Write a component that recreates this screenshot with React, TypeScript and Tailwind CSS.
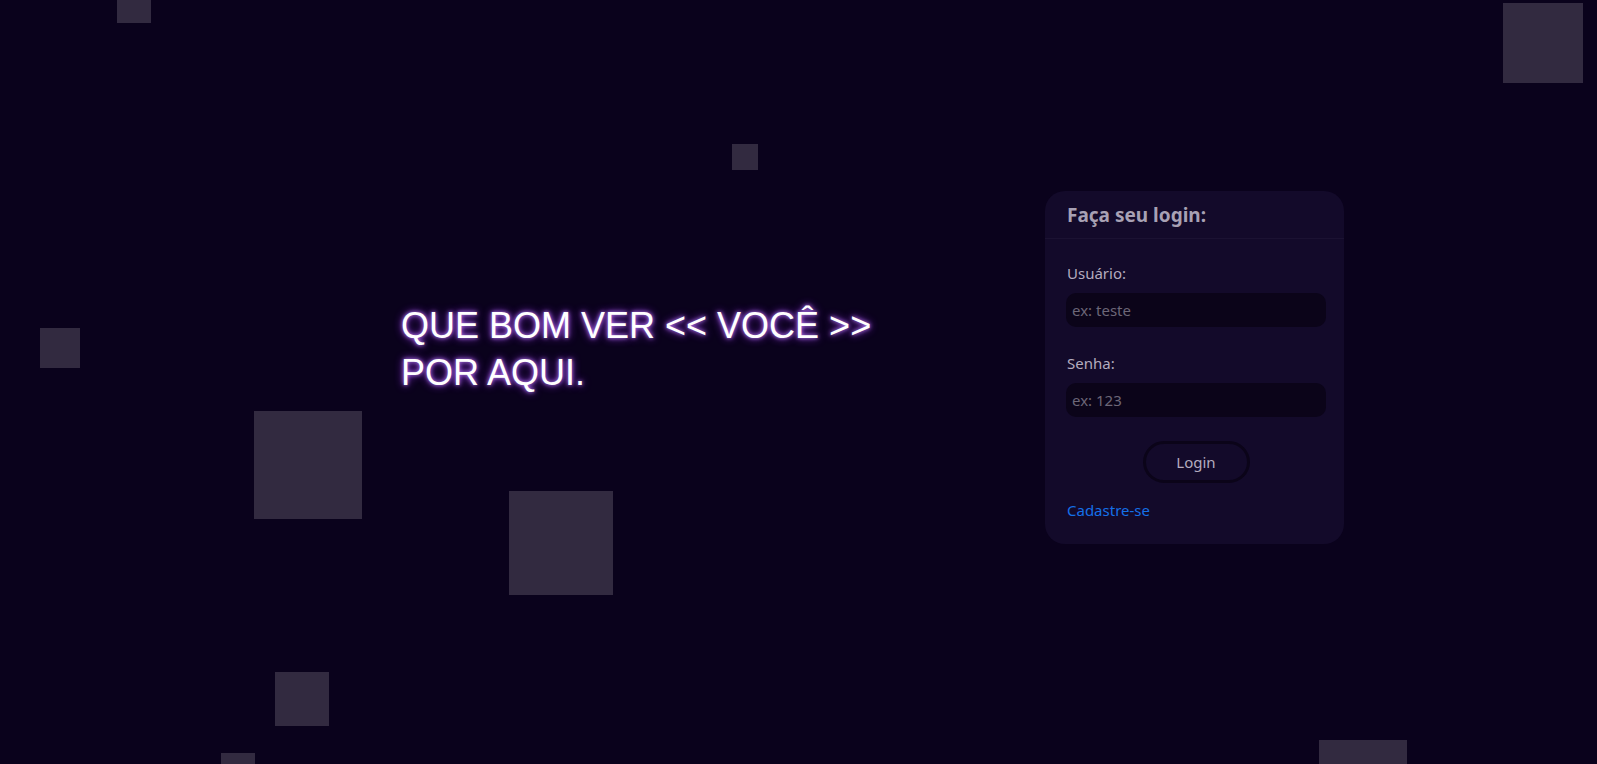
import React from "react";

const squares = [
  { top: -11, left: 117, size: 34 },
  { top: 144, left: 732, size: 26 },
  { top: 328, left: 40, size: 40 },
  { top: 411, left: 254, size: 108 },
  { top: 491, left: 509, size: 104 },
  { top: 672, left: 275, size: 54 },
  { top: 753, left: 221, size: 34 },
  { top: 3, left: 1503, size: 80 },
  { top: 740, left: 1319, size: 88 },
];

const App = () => {
  return (
    <div className="relative h-screen w-full overflow-hidden bg-[#0a021c]">
      {/* floating squares */}
      {squares.map((s, i) => (
        <div
          key={i}
          className="absolute bg-[#322a40]"
          style={{ top: s.top, left: s.left, width: s.size, height: s.size }}
        />
      ))}

      <div className="relative flex h-full items-start">
        {/* Welcome text */}
        <div className="shrink-0 pl-[401px] pt-[302px]">
          <h1 className="whitespace-nowrap font-['Liberation_Sans',Arial,sans-serif] text-[36px] leading-[47px] text-white [text-shadow:0_0_4px_#c084fc,0_0_9px_#9333ea]">
            QUE BOM VER &lt;&lt; VOCÊ &gt;&gt;
            <br />
            POR AQUI.
          </h1>
        </div>

        {/* Login card */}
        <div className="ml-auto mr-[253px] mt-[191px] w-[299px] rounded-[20px] bg-[#130a2a] font-['Noto_Sans',sans-serif] text-[#b3acbf]">
          <div className="flex h-[48px] items-center border-b border-[#1b1232] px-[22px] pt-[2px]">
            <h5 className="text-[19px] font-bold text-[#a8a1b4]">Faça seu login:</h5>
          </div>
          <div className="px-[21px] pb-[22px] pt-[22px]">
            <label className="mb-2 block pl-px text-[15px] leading-6">Usuário:</label>
            <input
              type="text"
              placeholder="ex: teste"
              className="block h-[34px] w-[260px] rounded-[10px] bg-[#0b0419] px-[6px] text-[15px] text-[#b3acbf] outline-none placeholder:text-[#6c6677]"
            />
            <label className="mb-2 mt-6 block pl-px text-[15px] leading-6">Senha:</label>
            <input
              type="password"
              placeholder="ex: 123"
              className="block h-[34px] w-[260px] rounded-[10px] bg-[#0b0419] px-[6px] text-[15px] text-[#b3acbf] outline-none placeholder:text-[#6c6677]"
            />
            <div className="mt-6 flex w-[260px] justify-center">
              <button className="h-[42px] w-[107px] rounded-full border-[3px] border-[#0b0419] bg-[#130a2a] text-[15px] text-[#b3acbf]">
                Login
              </button>
            </div>
            <a href="#" className="mt-[15px] block pl-px text-[15px] leading-6 text-[#1570e8]">
              Cadastre-se
            </a>
          </div>
        </div>
      </div>
    </div>
  );
};

export default App;
